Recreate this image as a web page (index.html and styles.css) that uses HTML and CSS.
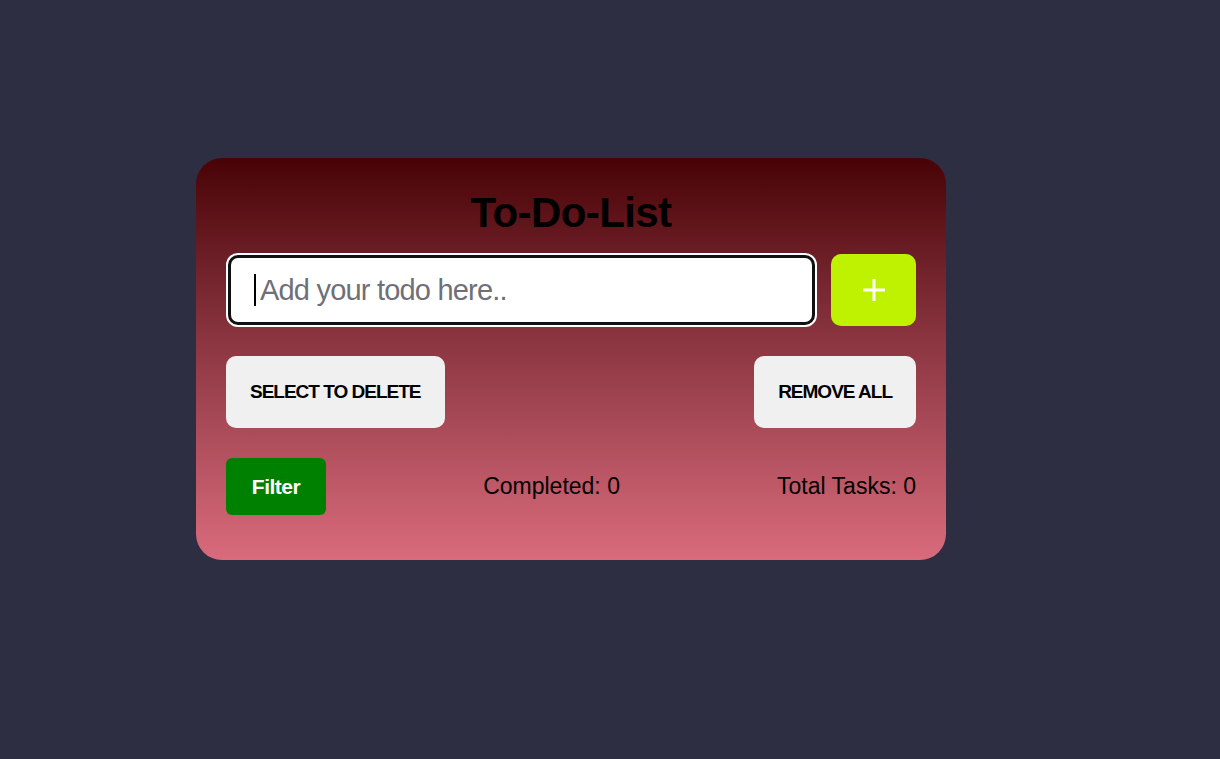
FILE: index.html
```html
<!DOCTYPE html>
<html lang="en">
<head>
<meta charset="utf-8">
<title>To-Do-List</title>
<link rel="stylesheet" href="styles.css">
</head>
<body>
<main class="page">
  <section class="card">
    <h1 class="title">To-Do-List</h1>
    <div class="add-row">
      <div class="input-wrap">
        <span class="caret"></span>
        <input class="todo-input" type="text" placeholder="Add your todo here..">
      </div>
      <button class="add-btn" aria-label="Add">
        <svg width="26" height="26" viewBox="0 0 26 26"><path d="M13 2v22M2 13h22" stroke="#fff" stroke-width="3" fill="none"/></svg>
      </button>
    </div>
    <div class="action-row">
      <button class="light-btn">SELECT TO DELETE</button>
      <button class="light-btn">REMOVE ALL</button>
    </div>
    <div class="stats-row">
      <button class="filter-btn">Filter</button>
      <span class="stat">Completed: 0</span>
      <span class="stat">Total Tasks: 0</span>
    </div>
  </section>
</main>
</body>
</html>
```
FILE: styles.css
```css
* { box-sizing: border-box; }
html, body { margin: 0; height: 100%; }
body {
  background: #2e2e42;
  font-family: "Liberation Sans", Arial, sans-serif;
}
.page {
  padding: 158px 0 0 196px;
}
.card {
  width: 750px;
  height: 402px;
  border-radius: 26px;
  background: linear-gradient(180deg, #480306 0%, #8a3540 45%, #d96b7c 100%);
  padding: 30px 30px 0 30px;
}
.title {
  margin: 0 0 16px 0;
  padding-top: 1px;
  text-align: center;
  font-size: 42px;
  letter-spacing: -0.6px;
  font-weight: bold;
  color: #000;
  line-height: 48px;
}
.add-row {
  display: flex;
  gap: 14px;
  align-items: center;
}
.input-wrap {
  position: relative;
  flex: 0 0 591px;
  height: 74px;
  border-radius: 12px;
  background: #fff;
  border: 2px solid #fff;
}
.todo-input {
  width: 100%;
  height: 100%;
  border: 3px solid #111;
  border-radius: 10px;
  padding: 0 0 0 29px;
  font-family: inherit;
  font-size: 29px;
  letter-spacing: -0.8px;
  color: #111;
  outline: none;
  background: #fff;
}
.todo-input::placeholder { color: #6f6f78; }
.caret {
  position: absolute;
  left: 26px;
  top: 19px;
  width: 2px;
  height: 32px;
  background: #000;
}
.add-btn {
  width: 85px;
  height: 72px;
  border: none;
  border-radius: 10px;
  background: #bff200;
  display: flex;
  align-items: center;
  justify-content: center;
  padding: 0;
}
.action-row {
  display: flex;
  justify-content: space-between;
  margin-top: 29px;
}
.light-btn {
  height: 72px;
  padding: 0 24px;
  border: none;
  border-radius: 10px;
  background: #f0f0f0;
  font-family: inherit;
  font-weight: bold;
  font-size: 19px;
  letter-spacing: -1px;
  color: #000;
}
.stats-row {
  display: flex;
  justify-content: space-between;
  align-items: center;
  margin-top: 30px;
}
.filter-btn {
  width: 100px;
  height: 57px;
  border: none;
  border-radius: 6px;
  background: #008000;
  color: #fff;
  font-family: inherit;
  font-weight: bold;
  font-size: 21px;
  letter-spacing: -0.5px;
}
.stat {
  font-size: 23px;
  color: #000;
}
```
